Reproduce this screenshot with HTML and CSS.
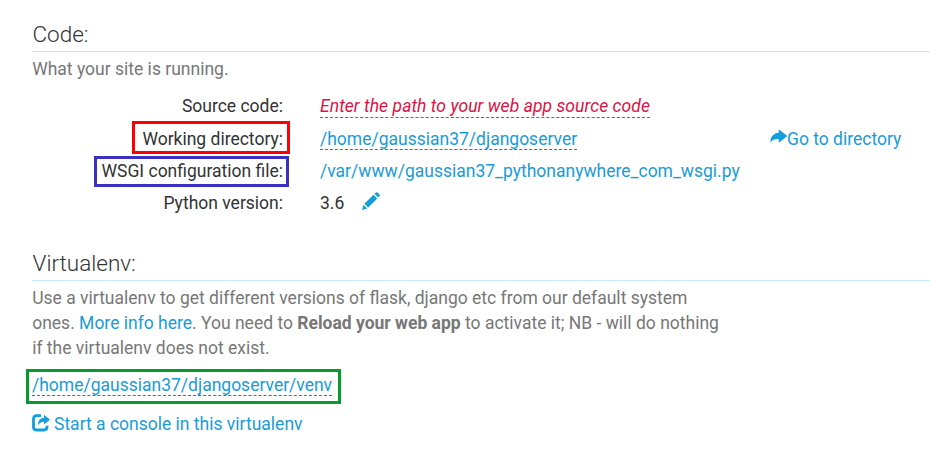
FILE: index.html
```
<!DOCTYPE html>
<html lang="en">
<head>
<meta charset="utf-8">
<title>Web app configuration</title>
<link rel="stylesheet" href="styles.css">
</head>
<body>
<section class="code">
  <h2>Code:</h2>
  <p class="help">What your site is running.</p>
  <div class="rows">
    <div class="label">Source code:</div>
    <div><a class="editable empty">Enter the path to your web app source code</a></div>
    <div></div>
    <div class="label"><span class="mark mark-red">Working directory:</span></div>
    <div><a class="editable">/home/gaussian37/djangoserver</a></div>
    <div><a class="go"><svg class="icon icon-share" viewBox="0 0 18 14"><path d="M9 0 17.800 7 9 14V10.200C5 10 2 11 .5 14 .2 8 3.500 4 9 3.700Z"/></svg>Go to directory</a></div>
    <div class="label"><span class="mark mark-blue">WSGI configuration file:</span></div>
    <div><a>/var/www/gaussian37_pythonanywhere_com_wsgi.py</a></div>
    <div></div>
    <div class="label">Python version:</div>
    <div class="version">3.6<svg class="icon icon-pencil" viewBox="0 0 18 18"><path d="M0 18 1.500 12.800 5.200 16.500ZM2.300 11.700 11.500 2.700 15.300 6.500 6.200 15.600ZM12.500 1.800 13.800.6Q14.700-.2 15.700.7L17.400 2.300Q18.300 3.200 17.400 4.200L16.200 5.500Z"/></svg></div>
    <div></div>
  </div>
</section>
<section class="venv">
  <h2>Virtualenv:</h2>
  <p class="help">Use a virtualenv to get different versions of flask, django etc from our default system ones. <a>More info here</a>. You need to <b>Reload your web app</b> to activate it; NB - will do nothing if the virtualenv does not exist.</p>
  <div class="path"><span class="mark mark-green"><a class="editable">/home/gaussian37/djangoserver/venv</a></span></div>
  <a class="console"><svg class="icon icon-console" viewBox="0 0 18 18"><path class="frame" d="M9 1.700H4.500Q1.500 1.700 1.500 4.700V13Q1.500 16 4.500 16H12Q15 16 15 13V11.700"/><path d="M12 .7 18 5.800 12 10.600V7.800Q8.500 7.500 6 11.500 5.500 4.500 12 3.800Z"/></svg>Start a console in this virtualenv</a>
</section>
</body>
</html>
```
FILE: styles.css
```
* { box-sizing: border-box; }
body {
  margin: 0;
  padding: 20px 0 0 32px;
  background: #fff;
  color: #333;
  font: 17.5px/25px Roboto, sans-serif;
  overflow: hidden;
}
h2 {
  margin: 0;
  height: 32px;
  border-bottom: 1px solid #bcecf8;
  font-size: 22.5px;
  font-weight: 300;
  line-height: 28px;
  text-indent: 0.5px;
}
p { margin: 0; }
.help { padding: 5px 0 0 0.2px; color: #777; }
a { color: #1a9bd7; }
.code { height: 229px; }
.rows {
  display: grid;
  grid-template-columns: 251px 412.5px 1fr;
  column-gap: 37px;
  grid-template-rows: 33px 32px 32px 32px;
  margin-top: 12px;
  white-space: nowrap;
}
.label { text-align: right; }
.editable { border-bottom: 1px dashed #0f83bb; }
.empty { padding-bottom: 1px; color: #dd1144; font-style: italic; letter-spacing: 0.07px; }
.mark { position: relative; }
.mark::after { content: ""; position: absolute; border: 3px solid; }
.mark-red::after { inset: -8px -7px -5px -10px; border-color: #f00; }
.mark-blue::after { inset: -5px -6px -6px -8px; border-color: #3a30c4; }
.mark-green::after { inset: -6px -9px -9px -6px; border-color: #069c2c; }
.icon { fill: #129fdb; }
.icon-share { width: 17.5px; height: 14px; vertical-align: 2px; }
.icon-pencil { width: 18px; height: 18px; margin-left: 18px; vertical-align: -1px; }
.venv .help { max-width: 700px; }
.path { margin-top: 12px; }
.console { display: flex; align-items: center; gap: 4px; margin-top: 14px; }
.icon-console { width: 18px; height: 18px; margin-top: -3px; }
.frame { fill: none; stroke: #129fdb; stroke-width: 2.800; }
```
